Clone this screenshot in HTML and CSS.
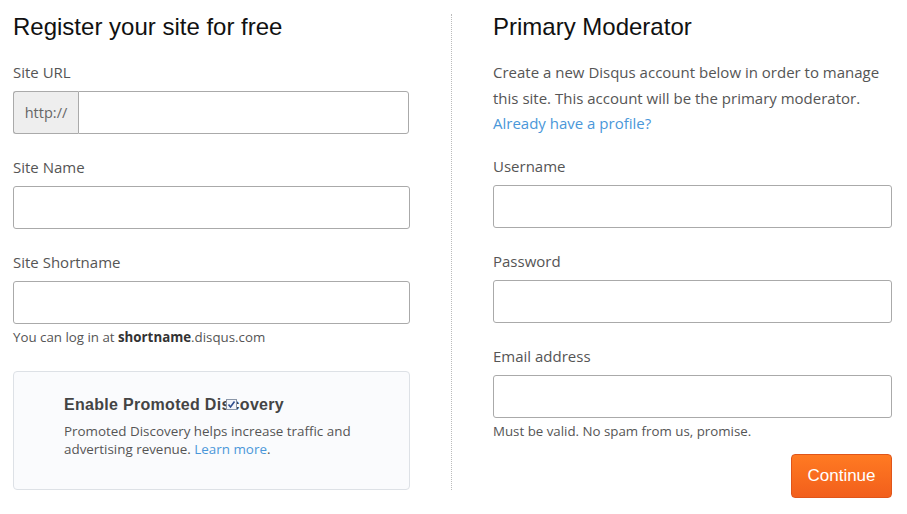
FILE: index.html
```html
<!DOCTYPE html>
<html lang="en">
<head>
    <meta charset="UTF-8">
    <title>Register your site</title>
    <link rel="stylesheet" href="styles.css">
</head>
<body>
    <main class="page">
        <section class="col">
            <h1>Register your site for free</h1>
            <div class="field">
                <label>Site URL</label>
                <div class="addon-group">
                    <span class="addon">http://</span>
                    <input type="text" class="addon-input">
                </div>
            </div>
            <div class="field">
                <label>Site Name</label>
                <input type="text">
            </div>
            <div class="field last">
                <label>Site Shortname</label>
                <input type="text">
                <p class="help">You can log in at <b>shortname</b>.disqus.com</p>
            </div>
            <div class="promo">
                <div class="promo-title">
                    Enable Promoted Discovery
                    <svg class="promo-check" width="11" height="11" viewBox="0 0 11 11">
                        <rect x="0.5" y="0.5" width="10" height="10" fill="#f4f6fa" stroke="#8a96a8"/>
                        <path d="M2.5 5.5 L4.5 8 L8.5 2.5" fill="none" stroke="#2f4f8f" stroke-width="1.6"/>
                    </svg>
                </div>
                <p class="promo-text">Promoted Discovery helps increase traffic and advertising revenue. <a href="#">Learn more</a>.</p>
            </div>
        </section>
        <div class="divider"></div>
        <section class="col">
            <h1>Primary Moderator</h1>
            <p class="intro">Create a new Disqus account below in order to manage this site. This account will be the primary moderator. <br><a href="#">Already have a profile?</a></p>
            <div class="field">
                <label>Username</label>
                <input type="text">
            </div>
            <div class="field">
                <label>Password</label>
                <input type="password">
            </div>
            <div class="field last">
                <label>Email address</label>
                <input type="text">
                <p class="help">Must be valid. No spam from us, promise.</p>
            </div>
            <div class="actions">
                <button class="btn-continue">Continue</button>
            </div>
        </section>
    </main>
</body>
</html>
```

FILE: styles.css
```css
body {
    margin: 0;
    background-color: #fff;
    font-family: "Open Sans", "Liberation Sans", sans-serif;
    color: #555;
}
.page {
    display: grid;
    grid-template-columns: 397px 1px 399px;
    column-gap: 41px;
    padding: 12px 0 0 13px;
}
.divider {
    margin-top: 2px;
    height: 476px;
    border-left: 1px dotted #bbb;
}
h1 {
    margin: 0 0 20px;
    font-family: "Liberation Sans", Arial, sans-serif;
    font-size: 24px;
    line-height: 30px;
    font-weight: normal;
    color: #111;
}
.field {
    margin-bottom: 23px;
}
.field.last {
    margin-bottom: 0;
}
label {
    display: block;
    font-size: 15px;
    line-height: 21px;
    margin-bottom: 8px;
}
input[type=text],
input[type=password] {
    display: block;
    box-sizing: border-box;
    width: 100%;
    height: 43px;
    margin: 0;
    padding: 0 10px;
    border: 1px #aaa solid;
    border-radius: 3px;
    background: #fff;
    font-size: 15px;
}
.addon-group {
    display: flex;
    width: 396px;
}
.addon {
    box-sizing: border-box;
    width: 65px;
    height: 43px;
    line-height: 41px;
    text-align: center;
    font-size: 14.5px;
    color: #666;
    background-color: #eee;
    border: 1px #aaa solid;
    border-right: none;
    border-radius: 3px 0 0 3px;
}
input.addon-input {
    flex: 1;
    border-radius: 0 3px 3px 0;
}
.help {
    margin: 4px 0 0;
    font-size: 13.3px;
    line-height: 18px;
    color: #555;
}
.help b {
    color: #333;
}
.promo {
    box-sizing: border-box;
    margin-top: 25px;
    height: 119px;
    padding: 23px 20px 0 50px;
    background-color: #fafbfd;
    border: 1px #dde1e6 solid;
    border-radius: 4px;
}
.promo-title {
    position: relative;
    font-family: "Liberation Sans", Arial, sans-serif;
    font-size: 16px;
    line-height: 20px;
    letter-spacing: 0.3px;
    font-weight: bold;
    color: #444;
}
.promo-check {
    position: absolute;
    left: 162px;
    top: 4px;
}
.promo-text {
    margin: 7px 0 0;
    font-size: 13.4px;
    line-height: 18px;
    color: #555;
}
a {
    color: #4a97d9;
    text-decoration: none;
}
.intro {
    margin: -2px 0 19px;
    font-size: 15px;
    line-height: 25.5px;
    color: #555;
}
.actions {
    display: flex;
    justify-content: flex-end;
    margin-top: 14px;
}
.btn-continue {
    width: 101px;
    height: 44px;
    border: 1px #e0551a solid;
    border-radius: 4px;
    background: linear-gradient(#ff7a22, #f25f1c);
    color: #fff;
    font-family: "Liberation Sans", Arial, sans-serif;
    font-size: 17px;
}
```
